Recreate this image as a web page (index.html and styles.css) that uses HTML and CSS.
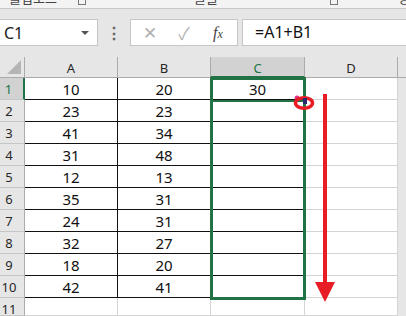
FILE: index.html
```html
<!DOCTYPE html>
<html>
<head>
    <title>Excel fill handle</title>
    <link rel="stylesheet" href="styles.css">
</head>
<body>
    <div class="ribbon">
        <span class="group-name clip">클립보드</span>
        <span class="launcher l1"></span>
        <span class="group-name font">글꼴</span>
        <span class="launcher l2"></span>
        <span class="group-name next">정</span>
    </div>

    <div class="formula-bar">
        <div class="name-box">
            <span>C1</span>
            <span class="caret"></span>
        </div>
        <div class="grip">⋮</div>
        <div class="fx-buttons">
            <span class="btn">✕</span>
            <span class="btn">✓</span>
            <span class="btn fx"><i>f</i><i class="x">x</i></span>
        </div>
        <div class="formula">=A1+B1</div>
    </div>

    <div class="sheet">
        <div class="grid">
            <div class="corner"><span class="tri"></span></div>
            <div class="col-head">A</div>
            <div class="col-head">B</div>
            <div class="col-head active">C</div>
            <div class="col-head">D</div>
            <div class="col-head rest"></div>

            <div class="row-head active">1</div><div class="cell data">10</div><div class="cell data">20</div><div class="cell c">30</div><div class="cell blank"></div><div class="cell rest"></div>
            <div class="row-head">2</div><div class="cell data">23</div><div class="cell data">23</div><div class="cell c"></div><div class="cell blank"></div><div class="cell rest"></div>
            <div class="row-head">3</div><div class="cell data">41</div><div class="cell data">34</div><div class="cell c"></div><div class="cell blank"></div><div class="cell rest"></div>
            <div class="row-head">4</div><div class="cell data">31</div><div class="cell data">48</div><div class="cell c"></div><div class="cell blank"></div><div class="cell rest"></div>
            <div class="row-head">5</div><div class="cell data">12</div><div class="cell data">13</div><div class="cell c"></div><div class="cell blank"></div><div class="cell rest"></div>
            <div class="row-head">6</div><div class="cell data">35</div><div class="cell data">31</div><div class="cell c"></div><div class="cell blank"></div><div class="cell rest"></div>
            <div class="row-head">7</div><div class="cell data">24</div><div class="cell data">31</div><div class="cell c"></div><div class="cell blank"></div><div class="cell rest"></div>
            <div class="row-head">8</div><div class="cell data">32</div><div class="cell data">27</div><div class="cell c"></div><div class="cell blank"></div><div class="cell rest"></div>
            <div class="row-head">9</div><div class="cell data">18</div><div class="cell data">20</div><div class="cell c"></div><div class="cell blank"></div><div class="cell rest"></div>
            <div class="row-head">10</div><div class="cell data">42</div><div class="cell data">41</div><div class="cell c"></div><div class="cell blank"></div><div class="cell rest"></div>
            <div class="row-head">11</div><div class="cell blank"></div><div class="cell blank"></div><div class="cell blank"></div><div class="cell blank"></div><div class="cell rest"></div>
        </div>

        <!-- selection range and annotation drawn over the grid -->
        <div class="selection"><div class="active-cell"></div></div>

        <svg class="handle-mark" width="26" height="20" viewBox="0 0 26 20">
            <circle cx="6" cy="5" r="2.5" fill="#e0338a"/>
            <ellipse cx="13" cy="10" rx="8.5" ry="5.2" fill="none" stroke="#e81c24" stroke-width="3.5"/>
            <rect x="12" y="5" width="4" height="6" fill="#2b2a6e"/>
        </svg>

        <svg class="arrow" width="22" height="210" viewBox="0 0 22 210">
            <rect x="9" y="0" width="4" height="192" fill="#e81c24"/>
            <polygon points="1,188 21,188 11,208" fill="#e81c24"/>
        </svg>
    </div>
</body>
</html>
```

FILE: styles.css
```css
body {
    margin: 0;
    width: 406px;
    height: 316px;
    overflow: hidden;
    background: #e6e6e6;
    font-family: "Noto Sans", "Noto Sans CJK KR", sans-serif;
}

/* bottom edge of the ribbon, group names cut off */
.ribbon {
    position: relative;
    height: 8px;
    background: #f3f3f3;
    border-bottom: 1px solid #c8c8c8;
    overflow: hidden;
}
.group-name {
    position: absolute;
    top: -12px;
    font-size: 13px;
    color: #444;
    font-family: "Noto Sans CJK KR", sans-serif;
}
.clip { left: 9px; }
.font { left: 194px; }
.next { left: 398px; }
.launcher {
    position: absolute;
    top: -3px;
    width: 6px;
    height: 6px;
    border: 1px solid #777;
}
.l1 { left: 78px; }
.l2 { left: 330px; }

.formula-bar {
    display: flex;
    align-items: center;
    padding: 10px 0 11px 0;
    height: 27px;
}
.name-box {
    box-sizing: border-box;
    width: 98px;
    height: 27px;
    background: white;
    border: 1px solid #c6c6c6;
    border-left: none;
    display: flex;
    align-items: center;
    justify-content: space-between;
    padding: 0 8px 0 4px;
    font-size: 16px;
    color: #222;
}
.caret {
    width: 0;
    height: 0;
    border-left: 4px solid transparent;
    border-right: 4px solid transparent;
    border-top: 4px solid #555;
}
.grip {
    width: 32px;
    text-align: center;
    font-size: 16px;
    font-weight: bold;
    color: #666;
}
.fx-buttons {
    box-sizing: border-box;
    width: 108px;
    height: 27px;
    background: white;
    border: 1px solid #c6c6c6;
    display: flex;
    align-items: center;
    justify-content: space-around;
    padding: 0 2px 0 2px;
}
.btn {
    font-size: 17px;
    color: #b0b0b0;
    width: 28px;
    text-align: center;
}
.fx {
    color: #444;
    font-family: "Liberation Serif", serif;
    font-size: 16px;
}
.fx .x {
    font-size: 12px;
}
.formula {
    box-sizing: border-box;
    flex: 1;
    margin-left: 4px;
    height: 27px;
    background: white;
    border: 1px solid #c6c6c6;
    border-right: none;
    padding-left: 12px;
    font-size: 16px;
    line-height: 25px;
    color: #111;
}

.sheet {
    position: relative;
}
.grid {
    display: grid;
    grid-template-columns: 25px 93px 93px 94px 93px 1fr;
    grid-template-rows: 21px repeat(10, 22px) 18px;
    background: white;
}
.corner {
    position: relative;
    background: #e6e6e6;
    border-right: 1px solid #ababab;
    border-bottom: 1px solid #ababab;
}
.tri {
    position: absolute;
    right: 3px;
    bottom: 3px;
    width: 0;
    height: 0;
    border-left: 14px solid transparent;
    border-bottom: 14px solid #b5b5b5;
}
.col-head {
    box-sizing: border-box;
    background: #e6e6e6;
    border-right: 1px solid #ababab;
    border-bottom: 1px solid #ababab;
    text-align: center;
    font-size: 13px;
    line-height: 22px;
    color: #262626;
}
.col-head.active {
    background: #d2d2d2;
    color: #217346;
    border-bottom: 2px solid #217346;
}
.col-head.rest {
    border-right: none;
}
.row-head {
    box-sizing: border-box;
    background: #e6e6e6;
    border-right: 1px solid #ababab;
    border-bottom: 1px solid #c6c6c6;
    font-size: 13px;
    line-height: 22px;
    text-align: center;
    padding-right: 6px;
    color: #262626;
}
.row-head.active {
    background: #d2d2d2;
    color: #217346;
    border-right: 2px solid #217346;
}
.cell {
    box-sizing: border-box;
    border-right: 1px solid #d4d4d4;
    border-bottom: 1px solid #d4d4d4;
    text-align: center;
    font-size: 15px;
    line-height: 22px;
    color: #111;
}
.cell.data {
    border-right: 1px solid #111;
    border-bottom: 1px solid #111;
}
.cell.c {
    border-bottom: 1px solid #111;
}
.cell.rest {
    background: #e6e6e6;
    border: none;
}

.selection {
    position: absolute;
    left: 210px;
    top: 20px;
    width: 96px;
    height: 223px;
    box-sizing: border-box;
    border: 3px solid #217346;
}
.active-cell {
    height: 20px;
    border-bottom: 2px solid #217346;
}
.handle-mark {
    position: absolute;
    left: 291px;
    top: 36px;
}
.arrow {
    position: absolute;
    left: 314px;
    top: 37px;
}
```
